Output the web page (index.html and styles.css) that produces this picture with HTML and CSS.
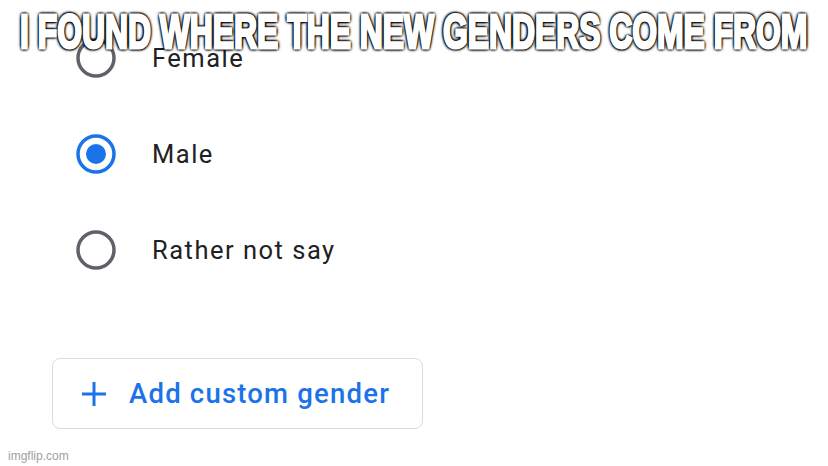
FILE: index.html
```html
<!DOCTYPE html>
<html lang="en">
<head>
    <meta charset="UTF-8">
    <meta name="viewport" content="width=device-width, initial-scale=1.0">
    <title>Gender</title>
    <link rel="stylesheet" href="styles.css">
</head>
<body>
    <div class="meme">
        <div class="options">
            <label class="option">
                <svg class="radio" width="40" height="40" viewBox="0 0 40 40">
                    <circle cx="20" cy="20" r="18" fill="none" stroke="#5f6368" stroke-width="3.5"/>
                </svg>
                <span>Female</span>
            </label>
            <label class="option">
                <svg class="radio" width="40" height="40" viewBox="0 0 40 40">
                    <circle cx="20" cy="20" r="18" fill="none" stroke="#1a73e8" stroke-width="3.5"/>
                    <circle cx="20" cy="20" r="10" fill="#1a73e8"/>
                </svg>
                <span>Male</span>
            </label>
            <label class="option">
                <svg class="radio" width="40" height="40" viewBox="0 0 40 40">
                    <circle cx="20" cy="20" r="18" fill="none" stroke="#5f6368" stroke-width="3.5"/>
                </svg>
                <span>Rather not say</span>
            </label>
        </div>

        <button class="add-btn" type="button">
            <svg class="plus" width="26" height="26" viewBox="0 0 26 26">
                <path d="M13 1v24M1 13h24" stroke="#1a73e8" stroke-width="3" fill="none"/>
            </svg>
            <span>Add custom gender</span>
        </button>

        <!-- meme caption sits over the screenshot -->
        <div class="caption"><span>I FOUND WHERE THE NEW GENDERS COME FROM</span></div>
        <div class="watermark">imgflip.com</div>
    </div>
</body>
</html>
```

FILE: styles.css
```css
body {
    margin: 0;
    background: #fff;
    font-family: Roboto, "Liberation Sans", sans-serif;
}
.meme {
    position: relative;
    width: 828px;
    height: 466px;
    overflow: hidden;
    background: #fff;
}
.options {
    display: flex;
    flex-direction: column;
    padding-top: 10px;
}
.option {
    display: flex;
    align-items: center;
    height: 96px;
    padding-left: 76px;
    gap: 36px;
    font-size: 25.5px;
    letter-spacing: 1.5px;
    color: #202124;
}
.radio {
    flex: none;
}
.add-btn {
    display: flex;
    align-items: center;
    gap: 22px;
    margin: 60px 0 0 52px;
    width: 371px;
    height: 71px;
    padding: 0 0 0 28px;
    border: 1px solid #dadce0;
    border-radius: 8px;
    background: #fff;
    font-family: Roboto, "Liberation Sans", sans-serif;
    font-size: 27.5px;
    font-weight: 500;
    letter-spacing: 1.2px;
    color: #1a73e8;
    box-sizing: border-box;
}
.plus {
    flex: none;
}
.caption {
    position: absolute;
    top: 7px;
    left: 0;
    right: 0;
    display: flex;
    justify-content: center;
    white-space: nowrap;
}
.caption span {
    flex: none;
    font-family: "Liberation Sans", Arial, sans-serif;
    font-weight: bold;
    font-size: 49px;
    line-height: 49px;
    color: #fff;
    -webkit-text-stroke: 3px #fff;
    text-shadow: 2px 0 2px #000, -2px 0 2px #000, 0 2px 2px #000, 0 -2px 2px #000,
        2px 2px 3px #000, -2px -2px 3px #000, 2px -2px 3px #000, -2px 2px 3px #000;
    transform: scaleX(0.65);
}
.watermark {
    position: absolute;
    left: 8px;
    bottom: 3px;
    font-family: "Liberation Sans", sans-serif;
    font-size: 12px;
    color: #a0a0a0;
}
```
